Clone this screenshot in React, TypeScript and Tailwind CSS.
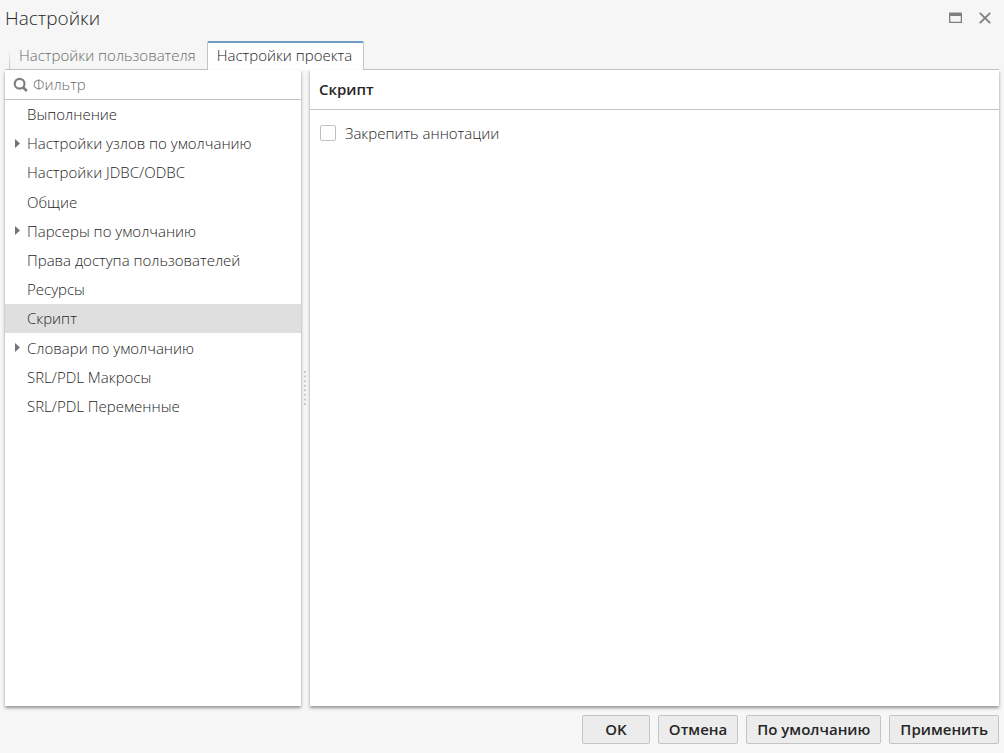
import { useState } from "react";

type Item = { label: string; expandable?: boolean };

const items: Item[] = [
  { label: "Выполнение" },
  { label: "Настройки узлов по умолчанию", expandable: true },
  { label: "Настройки JDBC/ODBC" },
  { label: "Общие" },
  { label: "Парсеры по умолчанию", expandable: true },
  { label: "Права доступа пользователей" },
  { label: "Ресурсы" },
  { label: "Скрипт" },
  { label: "Словари по умолчанию", expandable: true },
  { label: "SRL/PDL Макросы" },
  { label: "SRL/PDL Переменные" },
];

const actions = ["OK", "Отмена", "По умолчанию", "Применить"];

const panel = "flex flex-col bg-white shadow-[0_2px_3px_rgba(0,0,0,0.4)]";

export default function App() {
  const [selected, setSelected] = useState("Скрипт");
  const [pinned, setPinned] = useState(false);

  return (
    <div className="flex h-screen flex-col bg-[#f6f6f6] px-[5px] font-['Open_Sans',sans-serif] text-[15px] leading-5 font-light text-[#262626]">
      <header className="flex h-[37px] shrink-0 items-center justify-between pr-2 pb-[2px]">
        <h1 className="text-[19px]">Настройки</h1>
        <div className="flex items-center gap-[17px]">
          <button type="button" aria-label="Развернуть" className="flex">
            <svg className="h-3 w-[13px]" viewBox="0 0 13 12" fill="none">
              <path d="M0 1Q0 0.5 0.5 0.5H12.5Q13 0.5 13 1V11H0Z M1.3 4V9.7H11.7V4Z" fill="#808080" fillRule="evenodd" />
            </svg>
          </button>
          <button type="button" aria-label="Закрыть" className="flex">
            <svg className="h-3 w-3" viewBox="0 0 12 12" fill="none">
              <path d="M0.8 0.8L11.2 11.2M11.2 0.8L0.8 11.2" stroke="#808080" strokeWidth="1.9" />
            </svg>
          </button>
        </div>
      </header>

      <div role="tablist" className="flex h-[33px] shrink-0 items-stretch pt-1">
        <div className="flex w-1 border-b border-[#c4c4c4]" />
        <div className="flex items-end border-b border-[#c4c4c4]">
          <span className="h-5 w-px bg-linear-to-b from-transparent to-[#c4c4c4]" />
        </div>
        <button type="button" role="tab" aria-selected={false} className="border-b border-[#c4c4c4] pr-[11px] pl-[9px] text-[#6a6a6a]">
          Настройки пользователя
        </button>
        <button type="button" role="tab" aria-selected className="rounded-t-xs border-x border-t-2 border-x-[#c4c4c4] border-t-[#6f9ac4] bg-white pr-[11px] pb-[3px] pl-[9px]">
          Настройки проекта
        </button>
        <div className="flex-1 border-b border-[#c4c4c4]" />
      </div>

      <main className="flex min-h-0 flex-1">
        <aside className={`${panel} w-[296px] shrink-0`}>
          <div className="flex h-[30px] shrink-0 items-center gap-[5px] border-b border-[#c4c4c4] pl-2">
            <svg className="h-[15px] w-[15px] shrink-0" viewBox="0 0 15 15" fill="none" aria-hidden="true">
              <circle cx="6.6" cy="6.8" r="4.9" stroke="#808080" strokeWidth="2.2" />
              <path d="M10 10.2L13.8 14" stroke="#808080" strokeWidth="2.8" />
            </svg>
            <input
              type="text"
              aria-label="Фильтр"
              placeholder="Фильтр"
              className="min-w-0 flex-1 bg-transparent pb-[2px] outline-none placeholder:text-[#6a6a6a]"
            />
          </div>
          <ul className="grid h-[321px] shrink-0 auto-rows-fr">
            {items.map((item) => (
              <li key={item.label} className="flex">
                <button
                  type="button"
                  onClick={() => setSelected(item.label)}
                  className={`flex flex-1 items-center pb-px text-left ${selected === item.label ? "bg-[#dfdfdf]" : ""}`}
                >
                  <span className="flex w-[22px] shrink-0 pl-[10px]">
                    {item.expandable && (
                      <svg className="h-[9px] w-[5px]" viewBox="0 0 5 9" aria-hidden="true">
                        <path d="M0 0L5 4.5L0 9Z" fill="#747474" />
                      </svg>
                    )}
                  </span>
                  {item.label}
                </button>
              </li>
            ))}
          </ul>
        </aside>

        <div role="separator" aria-orientation="vertical" className="flex w-[9px] shrink-0 items-center pl-[3px]">
          <svg className="h-[34px] w-[2px]" viewBox="0 0 2 34" aria-hidden="true">
            <path d="M1 0V34" stroke="#c8c8c8" strokeWidth="2" strokeDasharray="2 2.57" />
          </svg>
        </div>

        <section className={`${panel} min-w-0 flex-1`}>
          <h2 className="flex h-10 shrink-0 items-center border-b border-[#c4c4c4] px-[9px] pb-[2px] font-semibold">Скрипт</h2>
          <label className="flex items-center gap-[9px] self-start px-[10px] py-[13px]">
            <input
              type="checkbox"
              checked={pinned}
              onChange={(e) => setPinned(e.target.checked)}
              className="h-4 w-4 appearance-none rounded-xs border border-[#c0c0c0] bg-white checked:bg-[#6f9ac4]"
            />
            Закрепить аннотации
          </label>
        </section>
      </main>

      <footer className="flex shrink-0 justify-end gap-2 py-[9px]">
        {actions.map((label) => (
          <button
            key={label}
            type="button"
            className="h-[29px] min-w-[68px] rounded-xs border border-[#c4c4c4] bg-[#ececec] px-[10px] pb-[2px] font-semibold"
          >
            {label}
          </button>
        ))}
      </footer>
    </div>
  );
}
